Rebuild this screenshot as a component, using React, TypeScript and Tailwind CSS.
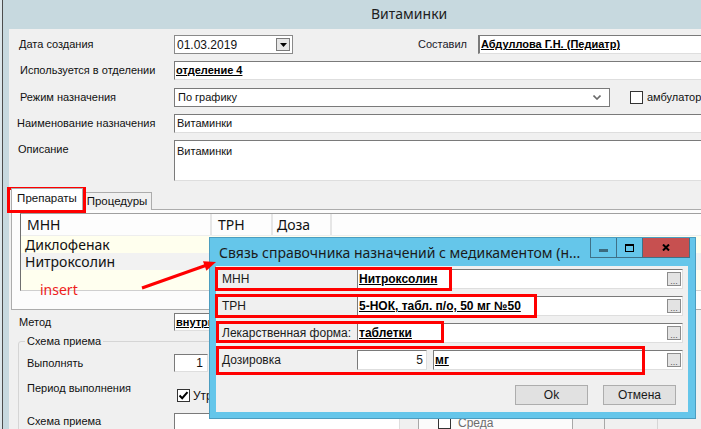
import React from 'react'

const sunken =
  'bg-white border border-t-[#7a7a7a] border-l-[#7a7a7a] border-r-[#dedede] border-b-[#dedede]'

function Label({ children, className = '' }: { children: React.ReactNode; className?: string }) {
  return <div className={`shrink-0 leading-[13px] whitespace-nowrap ${className}`}>{children}</div>
}

function Dots() {
  return (
    <div className="ml-auto mr-[1px] w-[14px] h-[14px] shrink-0 border border-[#8c8c8c] bg-[#e3e3e3] flex items-end justify-center pb-[1px] text-[9px] leading-[6px] text-[#555]">
      ...
    </div>
  )
}

function RedBox({ className }: { className: string }) {
  return <div className={`absolute border-[3px] border-[#ff0000] pointer-events-none ${className}`} />
}

function Check({ checked = false }: { checked?: boolean }) {
  return (
    <div className="w-[13px] h-[13px] shrink-0 bg-white border border-[#333] flex items-center justify-center">
      {checked && (
        <svg width="11" height="11" viewBox="0 0 11 11">
          <polyline points="1.5,5.5 4.2,8.2 9.5,2.2" fill="none" stroke="#000" strokeWidth="2" />
        </svg>
      )}
    </div>
  )
}

function Dialog() {
  return (
    <div className="absolute left-[209px] top-[237px] w-[487px] h-[182px] bg-[#65c6ea] border border-[#4b9dc0] flex flex-col">
      <div className="h-[28px] flex">
        <div className="flex-1 pl-[9px] flex items-center font-['Noto_Sans',sans-serif] text-[14px] text-[#1b1b1b] whitespace-nowrap overflow-hidden">
          Связь справочника назначений с медикаментом (н...
        </div>
        <div className="flex h-[20px] mr-[5px] border border-t-0 border-[#3f7187]">
          <div className="w-[26px] border-r border-[#3f7187] flex items-center justify-center">
            <div className="w-[9px] h-[3px] bg-[#3a6a7e] mt-[5px]" />
          </div>
          <div className="w-[26px] border-r border-[#3f7187] flex items-center justify-center">
            <div className="w-[9px] h-[8px] border border-t-2 border-black" />
          </div>
          <div className="w-[46px] bg-[#c75050] flex items-center justify-center">
            <svg width="8" height="7" viewBox="0 0 8 7">
              <path d="M1 0.5L7 6.5M7 0.5L1 6.5" stroke="#000" strokeWidth="2" />
            </svg>
          </div>
        </div>
      </div>
      <div className="ml-[6px] w-[472px] h-[146px] bg-[#f0f0f0] pt-[3px] text-[12px] text-[#1a1a1a]">
        <div className="flex items-center h-[20px]">
          <Label className="w-[141px] pl-[6px]">МНН</Label>
          <div className={`w-[326px] h-[20px] flex items-center ${sunken}`}>
            <span className="pl-[1px] font-bold underline text-black">Нитроксолин</span>
            <Dots />
          </div>
        </div>
        <div className="flex items-center h-[20px] mt-[7px]">
          <Label className="w-[141px] pl-[6px]">ТРН</Label>
          <div className={`w-[326px] h-[20px] flex items-center ${sunken}`}>
            <span className="pl-[1px] font-bold underline text-black">5-НОК, табл. п/о, 50 мг №50</span>
            <Dots />
          </div>
        </div>
        <div className="flex items-center h-[20px] mt-[7px]">
          <Label className="w-[141px] pl-[6px]">Лекарственная форма:</Label>
          <div className={`w-[326px] h-[20px] flex items-center ${sunken}`}>
            <span className="pl-[1px] font-bold underline text-black">таблетки</span>
            <Dots />
          </div>
        </div>
        <div className="flex items-center h-[20px] mt-[7px]">
          <Label className="w-[141px] pl-[6px]">Дозировка</Label>
          <div className={`w-[70px] h-[20px] flex items-center justify-end pr-[3px] ${sunken}`}>5</div>
          <div className={`ml-[6px] w-[250px] h-[20px] flex items-center ${sunken}`}>
            <span className="pl-[1px] font-bold underline text-black">мг</span>
            <Dots />
          </div>
        </div>
        <div className="flex mt-[15px] pl-[299px] gap-[15px]">
          <button className="w-[73px] h-[20px] bg-[#e1e1e1] border border-[#adadad] text-[12px] text-[#1a1a1a]">Ok</button>
          <button className="w-[73px] h-[20px] bg-[#e1e1e1] border border-[#adadad] text-[12px] text-[#1a1a1a]">Отмена</button>
        </div>
      </div>
    </div>
  )
}

export default function App() {
  return (
    <div className="relative w-[701px] h-[429px] overflow-hidden flex bg-[#c7d9df] font-['Liberation_Sans',Arial,sans-serif] text-[11px] text-[#111]">
      <div className="w-[2px] shrink-0 bg-[#dce6ea]" />
      <div className="w-px shrink-0 bg-[#4d4d4d]" />
      <div className="w-[820px] shrink-0 flex flex-col">
        <div className="h-[26px] shrink-0 flex items-center pl-[368px] font-['Noto_Sans',sans-serif] text-[14px] text-[#1e1e1e]">
          Витаминки
        </div>
        <div className="h-[3px] shrink-0" />
        <div className="flex flex-1">
          <div className="w-[6px] shrink-0" />
          <div className="flex-1 bg-[#f0f0f0] pt-[6px]">
            {/* row 1 */}
            <div className="flex items-center h-[19px]">
              <Label className="w-[165px] pl-[10px]">Дата создания</Label>
              <div className="w-[119px] h-[19px] flex items-center bg-white border border-[#8a8a8a]">
                <span className="pl-[2px] flex-1 text-[12px]">01.03.2019</span>
                <div className="w-[14px] h-[13px] mr-[2px] border border-[#7a7a7a] bg-[#e6e6e6] flex items-center justify-center">
                  <svg width="7" height="4" viewBox="0 0 7 4">
                    <path d="M0 0H7L3.5 4Z" fill="#000" />
                  </svg>
                </div>
              </div>
              <Label className="w-[174px] text-right text-[#1a1a2a]">Составил</Label>
              <div className={`ml-[11px] flex-1 h-[19px] flex items-center border-l-2 ${sunken}`}>
                <span className="pl-[1px] font-bold underline text-black">Абдуллова Г.Н. (Педиатр)</span>
              </div>
            </div>
            {/* row 2 */}
            <div className="flex items-center h-[19px] mt-[7px]">
              <Label className="w-[165px] pl-[11px]">Используется в отделении</Label>
              <div className={`flex-1 h-[19px] flex items-center ${sunken}`}>
                <span className="pl-[1px] font-bold underline text-black">отделение 4</span>
              </div>
            </div>
            {/* row 3 */}
            <div className="flex items-center h-[19px] mt-[8px]">
              <Label className="w-[165px] pl-[11px]">Режим назначения</Label>
              <div className="w-[436px] h-[19px] flex items-center bg-white border border-[#7a7a7a]">
                <span className="pl-[3px] flex-1">По графику</span>
                <svg width="8" height="5" viewBox="0 0 8 5" className="mr-[8px]">
                  <polyline points="0.5,0.5 4,4 7.5,0.5" fill="none" stroke="#6a6a6a" strokeWidth="1.6" />
                </svg>
              </div>
              <div className="ml-[20px]">
                <div className="w-[13px] h-[13px] bg-white border border-[#333]" />
              </div>
              <span className="ml-[4px] whitespace-nowrap">амбулаторно</span>
            </div>
            {/* row 4 */}
            <div className="flex items-center h-[19px] mt-[7px]">
              <Label className="w-[165px] pl-[8px]">Наименование назначения</Label>
              <div className={`flex-1 h-[19px] flex items-center ${sunken}`}>
                <span className="pl-[2px]">Витаминки</span>
              </div>
            </div>
            {/* row 5 */}
            <div className="flex h-[41px] mt-[7px]">
              <Label className="w-[165px] pl-[9px] pt-[3px]">Описание</Label>
              <div className={`flex-1 h-[41px] pt-[4px] pl-[2px] leading-[13px] ${sunken}`}>Витаминки</div>
            </div>
            {/* tabs */}
            <div className="flex items-end h-[22px] mt-[7px] ml-[2px] -mb-px relative">
              <div className="h-[22px] w-[72px] bg-white border border-b-0 border-[#acacac] flex items-center justify-center text-[11.5px] pb-[1px] relative z-10">
                Препараты
              </div>
              <div className="h-[18px] w-[69px] bg-[#f0f0f0] border border-l-0 border-b-0 border-[#acacac] flex items-center justify-center text-[11.5px]">
                Процедуры
              </div>
            </div>
            <div className="ml-[2px] h-[101px] border border-[#acacac] bg-[#fcfcfc] pt-[3px] pl-[8px]">
              <div className="h-[78px] border-l border-t border-b border-l-[#6f6f6f] border-t-[#a0a0a0] border-b-[#cfcfcf] bg-[#ffffef] flex flex-col font-['Noto_Sans',sans-serif] text-[14px] text-[#111]">
                <div className="h-[22px] flex bg-[#fdfdfd] border-b border-[#eeeeee]">
                  <div className="w-[191px] pl-[6px] flex items-center border-r-2 border-[#e6e6e6]">МНН</div>
                  <div className="w-[61px] pl-[6px] flex items-center border-r-2 border-[#e6e6e6]">ТРН</div>
                  <div className="w-[59px] pl-[4px] flex items-center border-r-2 border-[#e6e6e6]">Доза</div>
                  <div className="flex-1" />
                </div>
                <div className="h-[17px] flex items-center pl-[4px] bg-[#ffffee] leading-[16px]">Диклофенак</div>
                <div className="h-[17px] flex items-center pl-[4px] bg-[#f2f2f2] leading-[16px]">Нитроксолин</div>
                <div className="flex-1" />
              </div>
            </div>
            {/* method */}
            <div className="flex items-center h-[18px] mt-[3px]">
              <Label className="w-[165px] pl-[10px]">Метод</Label>
              <div className={`w-[220px] h-[18px] flex items-center ${sunken}`}>
                <span className="pl-[1px] font-bold underline text-black">внутрь</span>
              </div>
            </div>
            {/* group box */}
            <fieldset className="mt-[3px] ml-[9px] w-[640px] h-[130px] border border-[#d5d5d5] rounded-[3px] pl-[8px]">
              <legend className="-ml-[2px] px-[2px] leading-[14px]">Схема приема</legend>
              <div className="flex">
                <div className="w-[391px] shrink-0">
                  <div className="flex items-center h-[18px] mt-[6px]">
                    <Label className="w-[147px]">Выполнять</Label>
                    <div className={`w-[34px] h-[18px] flex items-center justify-end pr-[4px] text-[12px] ${sunken}`}>1</div>
                  </div>
                  <div className="flex h-[22px] mt-[10px]">
                    <Label className="w-[147px]">Период выполнения</Label>
                    <div className="flex items-center mt-[7px] ml-[3px] h-[13px]">
                      <Check checked />
                      <span className="ml-[3px] text-[12px]">Утро</span>
                    </div>
                  </div>
                  <div className="flex h-[17px] mt-[9px]">
                    <Label className="w-[147px] pt-[2px]">Схема приема</Label>
                    <div className={`w-[226px] h-[40px] ${sunken}`} />
                  </div>
                </div>
                <div className="mt-[30px] w-[155px] h-[80px] bg-[#fbfbfb] border-l border-r border-[#a8a8a8] pl-[19px] pt-[2px] text-[12px] text-[#6d6d6d]">
                  <div className="flex items-center h-[17px]"><Check /><span className="ml-[7px]">Понедельник</span></div>
                  <div className="flex items-center h-[17px]"><Check /><span className="ml-[7px]">Вторник</span></div>
                  <div className="flex items-center h-[17px]"><Check /><span className="ml-[7px]">Среда</span></div>
                </div>
                <div className="mt-[30px] w-[32px] h-[80px] border-r border-[#a8a8a8]" />
              </div>
            </fieldset>
          </div>
        </div>
      </div>

      <Dialog />

      {/* annotations */}
      <RedBox className="left-[7px] top-[187px] w-[79px] h-[26px]" />
      <RedBox className="left-[215px] top-[267px] w-[237px] h-[24px]" />
      <RedBox className="left-[215px] top-[294px] w-[322px] h-[24px]" />
      <RedBox className="left-[216px] top-[321px] w-[228px] h-[22px]" />
      <RedBox className="left-[216px] top-[346px] w-[429px] h-[29px]" />
      <svg className="absolute left-0 top-0 pointer-events-none" width="701" height="429">
        <line x1="142" y1="288" x2="207" y2="265" stroke="#ff0000" strokeWidth="3" />
        <polygon points="216,262 203,261.3 206.4,270.7" fill="#ff0000" />
      </svg>
      <div className="absolute left-[40px] top-[281px] font-['Noto_Sans',sans-serif] text-[14px] leading-[18px] text-[#ee1c1c]">
        insert
      </div>
    </div>
  )
}
